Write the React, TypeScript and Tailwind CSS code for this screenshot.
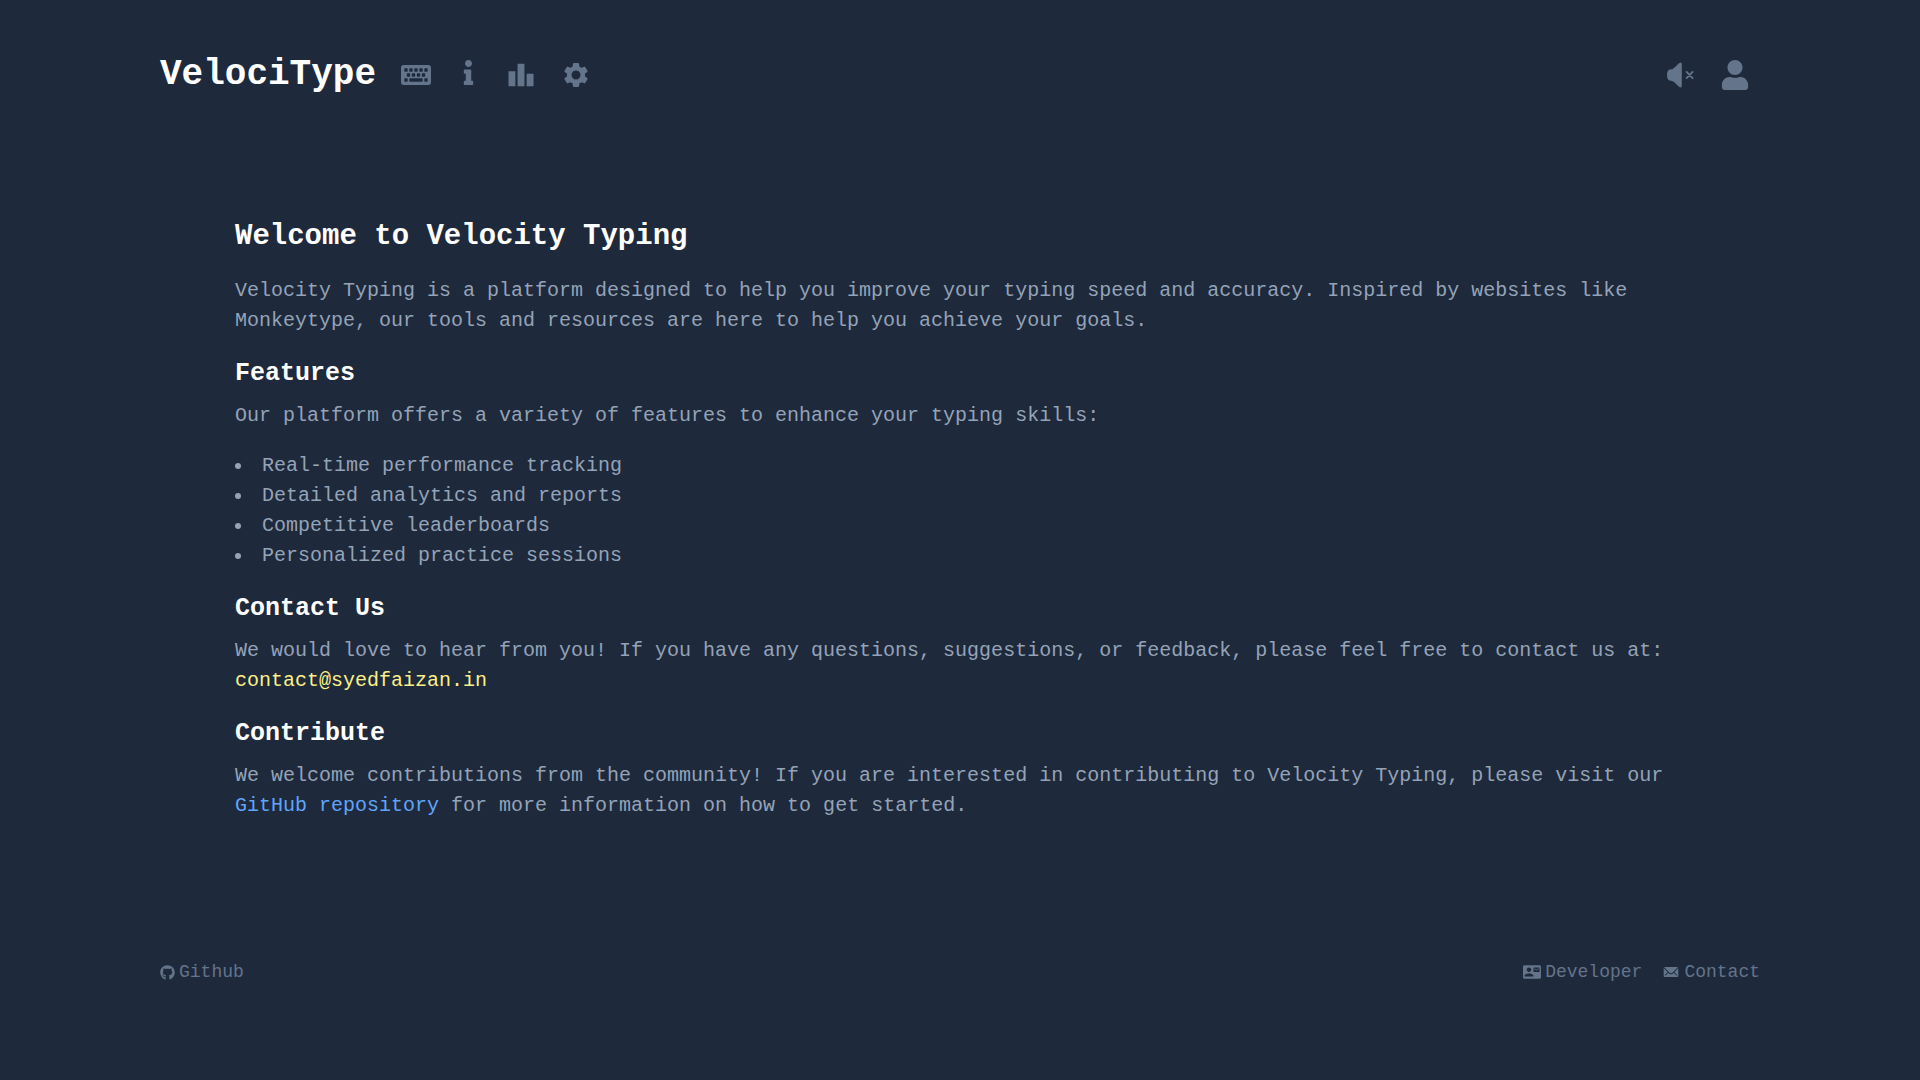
import { FaGithub, FaInfo, FaKeyboard, FaUser } from "react-icons/fa";
import { IoIosMail } from "react-icons/io";
import { MdContactMail, MdLeaderboard, MdSettings } from "react-icons/md";

const features = [
  "Real-time performance tracking",
  "Detailed analytics and reports",
  "Competitive leaderboards",
  "Personalized practice sessions",
];

function MutedSpeakerIcon() {
  return (
    <svg viewBox="0 0 30 30" className="size-[30px]" fill="none" aria-hidden="true">
      <path
        d="M4.500 9.500Q7.500 9.500 9 8L14 3.200Q16.800 1.500 16.800 4.500V25.500Q16.800 28.500 14 26.800L9 22Q7.500 20.500 4.500 20.500Q2 19.500 2 15Q2 10.500 4.500 9.500Z"
        fill="currentColor"
      />
      <path
        d="M21.6 11.9l6 6.2m0-6.2l-6 6.2"
        stroke="currentColor"
        strokeWidth="1.8"
        strokeLinecap="round"
      />
    </svg>
  );
}

function Header() {
  return (
    <header className="flex h-[150px] items-center justify-between">
      <div className="flex items-center gap-[25px]">
        <a href="#home" className="text-[36px] leading-[50px] font-bold text-white">
          VelociType
        </a>
        <nav className="flex items-start gap-[25px]">
          <a href="#typing" aria-label="Typing test">
            <FaKeyboard className="size-[30px]" />
          </a>
          <a href="#about" aria-label="About">
            <FaInfo className="size-[25px]" />
          </a>
          <a href="#leaderboard" aria-label="Leaderboard">
            <MdLeaderboard className="size-[30px]" />
          </a>
          <a href="#settings" aria-label="Settings">
            <MdSettings className="size-[30px]" />
          </a>
        </nav>
      </div>
      <div className="flex items-center gap-[25px] pr-[10px]">
        <button type="button" aria-label="Toggle sound">
          <MutedSpeakerIcon />
        </button>
        <button type="button" aria-label="Account">
          <FaUser className="size-[30px]" />
        </button>
      </div>
    </header>
  );
}

function SectionTitle({ children }: { children: string }) {
  return <h2 className="mb-[10px] text-[25px] leading-[35px] font-bold text-white">{children}</h2>;
}

function Footer() {
  return (
    <footer className="mt-[136px] flex items-center justify-between pb-20 text-[18px] leading-[30px]">
      <a href="#github" className="flex items-center gap-[4px]">
        <FaGithub className="size-[15px]" />
        Github
      </a>
      <div className="flex items-center gap-[20px]">
        <a href="#developer" className="flex items-center gap-[4px]">
          <MdContactMail className="size-[18px]" />
          Developer
        </a>
        <a href="#contact" className="flex items-center gap-[4px]">
          <IoIosMail className="size-[18px]" />
          Contact
        </a>
      </div>
    </footer>
  );
}

export default function App() {
  return (
    <div className="min-h-screen bg-[#1e293b] px-[160px] font-['Liberation_Mono',monospace] text-[#64748b]">
      <Header />
      <main className="px-[75px] pt-[66px] text-[20px] leading-[30px] text-[#94a3b8]">
        <h1 className="mb-[18px] text-[29px] leading-[42px] font-bold text-white">
          Welcome to Velocity Typing
        </h1>
        <p className="mb-5">
          Velocity Typing is a platform designed to help you improve your typing speed and accuracy.
          Inspired by websites like Monkeytype, our tools and resources are here to help you achieve
          your goals.
        </p>
        <SectionTitle>Features</SectionTitle>
        <p className="mb-5">
          Our platform offers a variety of features to enhance your typing skills:
        </p>
        <ul className="mb-5 list-inside list-disc">
          {features.map((feature) => (
            <li key={feature}>{feature}</li>
          ))}
        </ul>
        <SectionTitle>Contact Us</SectionTitle>
        <p className="mb-5">
          We would love to hear from you! If you have any questions, suggestions, or feedback,
          please feel free to contact us at:{" "}
          <a href="mailto:contact@syedfaizan.in" className="text-[#faf089]">
            contact@syedfaizan.in
          </a>
        </p>
        <SectionTitle>Contribute</SectionTitle>
        <p>
          We welcome contributions from the community! If you are interested in contributing to
          Velocity Typing, please visit our{" "}
          <a href="#repository" className="text-[#60a5fa]">
            GitHub repository
          </a>{" "}
          for more information on how to get started.
        </p>
      </main>
      <Footer />
    </div>
  );
}
